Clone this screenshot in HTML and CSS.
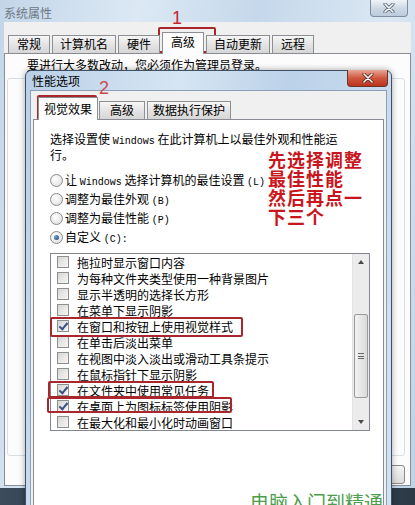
FILE: index.html
```html
<!DOCTYPE html>
<html lang="zh-CN">
<head>
  <meta charset="UTF-8" />
  <title>系统属性</title>
  <link rel="stylesheet" href="styles.css">
</head>
<body>
  <div class="win">
    <div class="win-title">
      <span class="win-name">系统属性</span>
      <span class="win-close">
        <svg width="14" height="10" viewBox="0 0 14 10"><path d="M3 1 L11 9 M11 1 L3 9" stroke="#5b6878" stroke-width="3.2" stroke-linecap="round"/><path d="M3 1 L11 9 M11 1 L3 9" stroke="#fff" stroke-width="1.6" stroke-linecap="round"/></svg>
      </span>
    </div>
    <div class="win-client">
      <div class="tabs">
        <div class="tab">常规</div>
        <div class="tab">计算机名</div>
        <div class="tab">硬件</div>
        <div class="tab active">高级</div>
        <div class="tab">自动更新</div>
        <div class="tab">远程</div>
      </div>
      <div class="panel">
        <p class="note">要进行大多数改动，您必须作为管理员登录。</p>
        <div class="group"></div>
        <div class="btn"></div>
      </div>
    </div>
  </div>
  <div class="desk"></div>

  <div class="dlg">
    <div class="dlg-title">性能选项</div>
    <span class="dlg-close">
      <svg width="14" height="10" viewBox="0 0 14 10"><path d="M3 1 L11 9 M11 1 L3 9" stroke="#6b2a20" stroke-width="3.2" stroke-linecap="round"/><path d="M3 1 L11 9 M11 1 L3 9" stroke="#fff" stroke-width="1.6" stroke-linecap="round"/></svg>
    </span>
    <div class="dlg-body">
      <div class="tabs small">
        <div class="tab active">视觉效果</div>
        <div class="tab">高级</div>
        <div class="tab">数据执行保护</div>
      </div>
      <div class="sheet">
        <p class="desc">选择设置使 <span class="en">Windows</span> 在此计算机上以最佳外观和性能运<br>行。</p>
        <div class="radios">
          <div class="radio-row"><span class="radio"></span><span class="lbl">让 <span class="en">Windows</span> 选择计算机的最佳设置 <span class="en">(L)</span></span></div>
          <div class="radio-row"><span class="radio"></span><span class="lbl">调整为最佳外观 <span class="en">(B)</span></span></div>
          <div class="radio-row"><span class="radio"></span><span class="lbl">调整为最佳性能 <span class="en">(P)</span></span></div>
          <div class="radio-row"><span class="radio on"></span><span class="lbl">自定义 <span class="en">(C):</span></span></div>
        </div>
        <div class="listbox">
          <div class="items">
            <div class="item"><span class="chk"></span>拖拉时显示窗口内容</div>
            <div class="item"><span class="chk"></span>为每种文件夹类型使用一种背景图片</div>
            <div class="item"><span class="chk"></span>显示半透明的选择长方形</div>
            <div class="item"><span class="chk"></span>在菜单下显示阴影</div>
            <div class="item"><span class="chk on"></span>在窗口和按钮上使用视觉样式</div>
            <div class="item"><span class="chk"></span>在单击后淡出菜单</div>
            <div class="item"><span class="chk"></span>在视图中淡入淡出或滑动工具条提示</div>
            <div class="item"><span class="chk"></span>在鼠标指针下显示阴影</div>
            <div class="item"><span class="chk on"></span>在文件夹中使用常见任务</div>
            <div class="item"><span class="chk on"></span>在桌面上为图标标签使用阴影</div>
            <div class="item"><span class="chk"></span>在最大化和最小化时动画窗口</div>
          </div>
          <div class="scroll">
            <div class="arrow up"></div>
            <div class="track"><div class="thumb"><span class="grip"></span></div></div>
            <div class="arrow down"></div>
          </div>
        </div>
      </div>
    </div>
  </div>

  <!-- annotations drawn over the screenshot -->
  <div class="mark-num n1">1</div>
  <div class="mark-num n2">2</div>
  <div class="mark box-tab1"></div>
  <div class="mark box-tab2"></div>
  <div class="mark box-a"></div>
  <div class="mark box-b"></div>
  <div class="mark box-c"></div>
  <div class="hint">
    <div class="hint-line">先选择调整</div>
    <div class="hint-line">最佳性能</div>
    <div class="hint-line">然后再点一</div>
    <div class="hint-line">下三个</div>
  </div>
  <div class="water">电脑入门到精通</div>
</body>
</html>
```

FILE: styles.css
```css
* {
  box-sizing: border-box;
}
body {
  margin: 0;
  width: 415px;
  height: 505px;
  overflow: hidden;
  position: relative;
  font-family: "Noto Sans CJK SC", sans-serif;
  font-size: 12px;
  color: #000;
  background: #2e3c4b;
}
.en {
  font-family: "Liberation Mono", monospace;
  font-size: 10px;
}

/* outer window */
.win {
  height: 488px;
  display: flex;
  flex-direction: column;
  padding: 0 4px 2px;
  background: linear-gradient(100deg, #c3d6e9 0%, #dce8f4 28%, #c5d8eb 52%, #dbe7f3 78%, #bed3e8 100%);
}
.win-title {
  height: 22px;
  display: flex;
  justify-content: space-between;
  align-items: flex-start;
}
.win-name {
  color: #6e7883;
  line-height: 14px;
  padding-top: 6px;
}
.win-close {
  width: 38px;
  height: 17px;
  margin-right: 3px;
  display: flex;
  align-items: center;
  justify-content: center;
  border: 1px solid #7d8d9f;
  border-top: none;
  border-radius: 0 0 4px 4px;
  background: linear-gradient(#eef3f8, #cbd7e3 55%, #bccbdb);
}
.win-client {
  flex: 1;
  display: flex;
  flex-direction: column;
  background: #f0f0f0;
  padding-top: 10px;
}

/* tabs */
.tabs {
  display: flex;
  align-items: flex-end;
  padding-left: 4px;
  position: relative;
  z-index: 1;
}
.tab {
  height: 18px;
  line-height: 16px;
  padding: 0 7px;
  min-width: 42px;
  text-align: center;
  margin-right: 2px;
  border: 1px solid #8d8f93;
  border-bottom: none;
  background: linear-gradient(#f6f6f6, #e4e4e4 50%, #d6d6d6);
  white-space: nowrap;
}
.tab.active {
  height: 22px;
  line-height: 18px;
  background: #fcfcfc;
  margin-bottom: -1px;
}
.panel {
  flex: 1;
  display: flex;
  flex-direction: column;
  border: 1px solid #898c95;
  background: #fcfcfc;
  padding: 4px 5px 0 2px;
}
.note {
  margin: 0 0 0 20px;
  line-height: 14px;
  text-decoration: underline;
}
.group {
  height: 378px;
  margin-top: 6px;
  border: 1px solid #d5dfe5;
  border-radius: 3px;
}
.btn {
  align-self: flex-end;
  width: 75px;
  height: 19px;
  margin-top: 9px;
  border: 1px solid #8a8a8a;
  border-radius: 3px;
  background: linear-gradient(#f4f4f4, #dcdcdc);
}
.desk {
  height: 17px;
  background: linear-gradient(90deg, #3b4b5c, #26333f 40%, #3e4e5f 70%, #2b3845);
}

/* performance options dialog */
.dlg {
  position: absolute;
  left: 25px;
  top: 70px;
  width: 367px;
  height: 445px;
  display: flex;
  flex-direction: column;
  padding: 0 4px;
  border: 1px solid #3c5068;
  border-radius: 6px 6px 0 0;
  background: linear-gradient(100deg, #b9d0e8 0%, #d6e5f3 35%, #bcd2e9 60%, #d3e2f1 100%);
  box-shadow: 0 0 6px rgba(0, 0, 0, 0.35);
}
.dlg-title {
  height: 19px;
  line-height: 19px;
  padding-left: 2px;
}
.dlg-close {
  position: absolute;
  top: -1px;
  right: 3px;
  width: 41px;
  height: 17px;
  display: flex;
  align-items: center;
  justify-content: center;
  border: 1px solid #6e3328;
  border-top: none;
  border-radius: 0 0 4px 4px;
  background: linear-gradient(#e8a796, #d0583f 50%, #b8341e);
}
.dlg-body {
  flex: 1;
  display: flex;
  flex-direction: column;
  background: #f0f0f0;
  border: 1px solid #8aa0b8;
  padding: 6px 2px 0;
}
.tabs.small {
  padding-left: 5px;
}
.tabs.small .tab {
  padding: 0 5px;
  min-width: 46px;
  margin-right: 1px;
}
.tabs.small .tab.active {
  height: 23px;
  line-height: 22px;
}
.tabs.small .tab:last-child {
  margin-left: 1px;
}
.sheet {
  flex: 1;
  border: 1px solid #898c95;
  background: #fff;
  padding: 12px 0 0 16px;
}
.desc {
  margin: 0;
  line-height: 13px;
}
.radios {
  margin-top: 10px;
}
.radio-row {
  height: 19px;
  display: flex;
  align-items: center;
}
.lbl {
  white-space: pre;
  line-height: 19px;
}
.radio {
  width: 13px;
  height: 13px;
  margin-right: 2px;
  border-radius: 50%;
  border: 1px solid #8b8b8b;
  background: radial-gradient(circle at 40% 35%, #fff, #dadada);
  display: flex;
  align-items: center;
  justify-content: center;
}
.radio.on::after {
  content: "";
  width: 5px;
  height: 5px;
  border-radius: 50%;
  background: radial-gradient(circle at 35% 35%, #6fa0d0, #1b3f70);
}

/* list box */
.listbox {
  margin-top: 6px;
  width: 320px;
  height: 178px;
  border: 1px solid #828790;
  display: flex;
  background: #fff;
}
.items {
  flex: 1;
  overflow: hidden;
}
.item {
  height: 16px;
  display: flex;
  align-items: center;
  gap: 8px;
  padding-left: 6px;
  white-space: nowrap;
}
.chk {
  width: 12px;
  height: 12px;
  flex: none;
  border: 1px solid #8e8f8f;
  background: linear-gradient(135deg, #d6d6d6, #f7f7f7);
  position: relative;
}
.chk.on::after {
  content: "";
  position: absolute;
  left: 3px;
  top: 0;
  width: 3px;
  height: 7px;
  border: solid #3d4e80;
  border-width: 0 2px 2px 0;
  transform: rotate(40deg);
}
.scroll {
  width: 17px;
  display: flex;
  flex-direction: column;
  background: #ececec;
  border-left: 1px solid #e2e2e2;
}
.arrow {
  height: 16px;
  display: flex;
  align-items: center;
  justify-content: center;
}
.arrow.up::after {
  content: "";
  border: 3px solid transparent;
  border-bottom: 4px solid #4a4a4a;
  border-top: none;
}
.arrow.down::after {
  content: "";
  border: 3px solid transparent;
  border-top: 4px solid #4a4a4a;
  border-bottom: none;
}
.track {
  flex: 1;
  padding-top: 44px;
}
.thumb {
  height: 84px;
  margin: 0 1px;
  border: 1px solid #9a9a9a;
  border-radius: 2px;
  background: linear-gradient(90deg, #f3f3f3, #dadada);
  display: flex;
  align-items: center;
  justify-content: center;
}
.grip {
  width: 6px;
  height: 6px;
  border-top: 1px solid #666;
  border-bottom: 1px solid #666;
  position: relative;
}
.grip::after {
  content: "";
  position: absolute;
  left: 0;
  right: 0;
  top: 2px;
  border-top: 1px solid #666;
}

/* red annotations */
.mark {
  position: absolute;
  border: 2px solid #a8262c;
  border-radius: 2px;
}
.box-tab1 { left: 158px; top: 27px; width: 58px; height: 26px; }
.box-tab2 { left: 37px; top: 95px; width: 60px; height: 25px; }
.box-a { left: 50px; top: 317px; width: 193px; height: 20px; }
.box-b { left: 48px; top: 381px; width: 166px; height: 17px; }
.box-c { left: 47px; top: 397px; width: 185px; height: 16px; }
.mark-num {
  position: absolute;
  color: #c8262c;
  font-family: "Liberation Sans", sans-serif;
  font-size: 18px;
  line-height: 18px;
}
.n1 { left: 172px; top: 9px; }
.n2 { left: 99px; top: 79px; color: #d04848; }
.hint {
  position: absolute;
  left: 268px;
  top: 150px;
  color: #c9161c;
  font-size: 18px;
  font-weight: 700;
  letter-spacing: 1px;
}
.hint-line {
  height: 19px;
  line-height: 19px;
}
.water {
  position: absolute;
  left: 250px;
  top: 491px;
  color: #4c9e4c;
  font-size: 19px;
  line-height: 22px;
}
```
